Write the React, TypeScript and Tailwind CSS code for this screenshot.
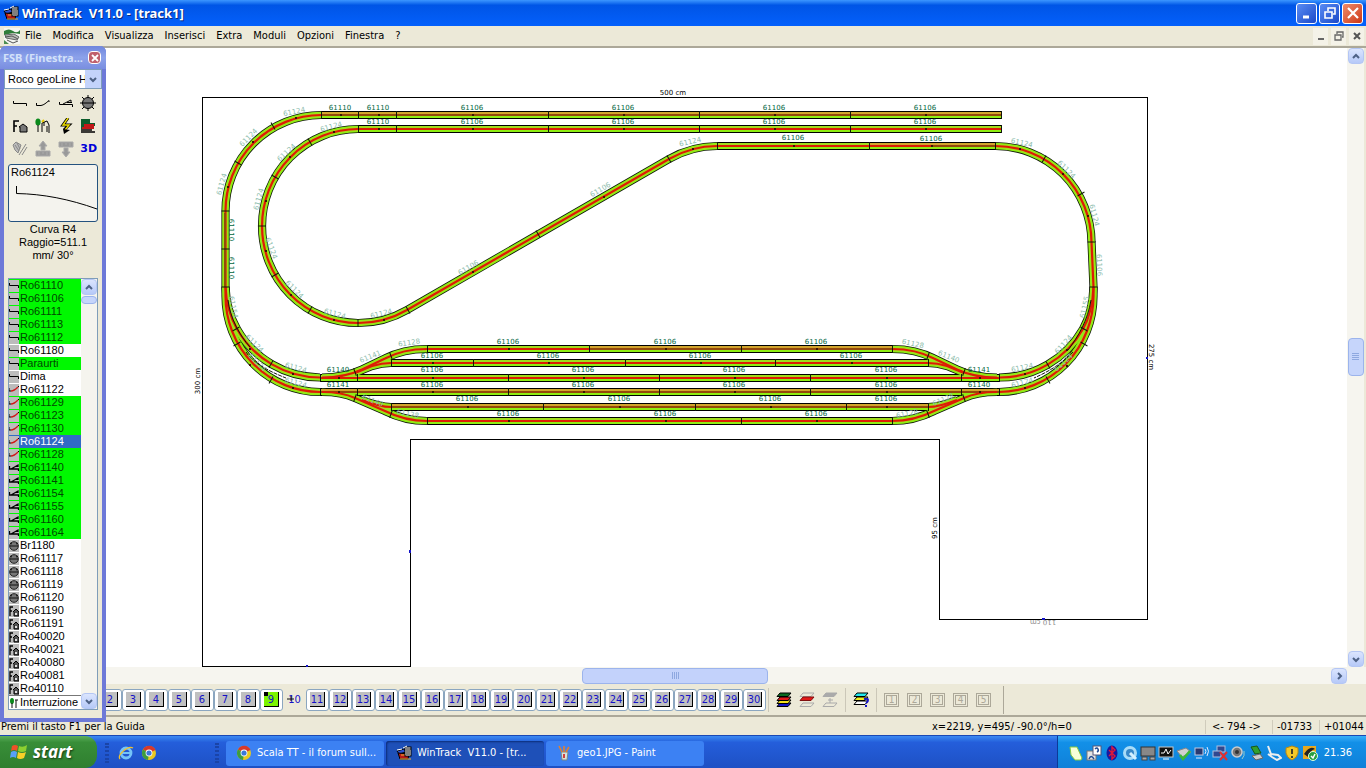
import type { ReactNode } from 'react';

const TAHOMA = "font-['DejaVu_Sans_Condensed','Noto_Sans',sans-serif]";

const MENUS = ['File', 'Modifica', 'Visualizza', 'Inserisci', 'Extra', 'Moduli', 'Opzioni', 'Finestra', '?'];

type PartKind = 'straight' | 'curve' | 'switch' | 'turntable' | 'house';

interface Part {
  name: string;
  kind: PartKind;
  inStock?: boolean;
}

const PARTS: Part[] = [
  { name: 'Ro61110', kind: 'straight', inStock: true },
  { name: 'Ro61106', kind: 'straight', inStock: true },
  { name: 'Ro61111', kind: 'straight', inStock: true },
  { name: 'Ro61113', kind: 'straight', inStock: true },
  { name: 'Ro61112', kind: 'straight', inStock: true },
  { name: 'Ro61180', kind: 'straight' },
  { name: 'Paraurti', kind: 'straight', inStock: true },
  { name: 'Dima', kind: 'straight' },
  { name: 'Ro61122', kind: 'curve' },
  { name: 'Ro61129', kind: 'curve', inStock: true },
  { name: 'Ro61123', kind: 'curve', inStock: true },
  { name: 'Ro61130', kind: 'curve', inStock: true },
  { name: 'Ro61124', kind: 'curve', inStock: true },
  { name: 'Ro61128', kind: 'curve', inStock: true },
  { name: 'Ro61140', kind: 'switch', inStock: true },
  { name: 'Ro61141', kind: 'switch', inStock: true },
  { name: 'Ro61154', kind: 'switch', inStock: true },
  { name: 'Ro61155', kind: 'switch', inStock: true },
  { name: 'Ro61160', kind: 'switch', inStock: true },
  { name: 'Ro61164', kind: 'switch', inStock: true },
  { name: 'Br1180', kind: 'turntable' },
  { name: 'Ro61117', kind: 'turntable' },
  { name: 'Ro61118', kind: 'turntable' },
  { name: 'Ro61119', kind: 'turntable' },
  { name: 'Ro61120', kind: 'turntable' },
  { name: 'Ro61190', kind: 'house' },
  { name: 'Ro61191', kind: 'house' },
  { name: 'Ro40020', kind: 'house' },
  { name: 'Ro40021', kind: 'house' },
  { name: 'Ro40080', kind: 'house' },
  { name: 'Ro40081', kind: 'house' },
  { name: 'Ro40110', kind: 'house' },
];

const SELECTED = 'Ro61124';
const LAYERS = Array.from({ length: 29 }, (_, i) => i + 2);

/* ---------- Track plan ---------- */

interface Straight {
  y: number;
  x1: number;
  x2: number;
  joints: number[];
  labels: number[];
  rust?: boolean;
  labelY: number;
}

const STRAIGHTS: Straight[] = [
  { y: 115, x1: 321, x2: 1001, joints: [321, 358, 396, 548, 699, 850], labels: [340, 378, 472, 623, 774, 925], labelY: 110, rust: true },
  { y: 129, x1: 358, x2: 1001, joints: [358, 396, 548, 699, 850], labels: [378, 472, 623, 774, 925], labelY: 124 },
  { y: 146, x1: 717, x2: 869, joints: [717], labels: [793], labelY: 140 },
  { y: 146, x1: 869, x2: 995, joints: [869, 995], labels: [931], labelY: 141, rust: true },
  { y: 349, x1: 427, x2: 589, joints: [427], labels: [508], labelY: 344 },
  { y: 349, x1: 589, x2: 892, joints: [589, 741, 892], labels: [665, 816], labelY: 344, rust: true },
  { y: 363, x1: 391, x2: 928, joints: [391, 473, 625, 775, 928], labels: [432, 548, 700, 851], labelY: 358 },
  { y: 378, x1: 320, x2: 999, joints: [320, 357, 508, 659, 810, 961, 999], labels: [338, 432, 583, 734, 886, 979], labelY: 372 },
  { y: 392, x1: 320, x2: 999, joints: [320, 357, 508, 659, 810, 961, 999], labels: [338, 432, 583, 734, 886, 979], labelY: 387, rust: true },
  { y: 407, x1: 391, x2: 928, joints: [391, 543, 695, 846, 928], labels: [467, 619, 770, 886], labelY: 401, rust: true },
  { y: 421, x1: 427, x2: 589, joints: [427], labels: [508], labelY: 416 },
  { y: 421, x1: 589, x2: 892, joints: [741, 892], labels: [665, 816], labelY: 416 },
];

function straightName(s: Straight, x: number) {
  if (x < 400 && s.y < 200) return '61110';
  if (x === 338) return s.y === 378 ? '61140' : '61141';
  if (x === 979) return s.y === 378 ? '61141' : '61140';
  return '61106';
}

const CURVES = [
  'M321 115 A96 96 0 0 0 225.5 211 L225.5 296 A95 96 0 0 0 320 392',
  'M225.5 287 C226 300 229 315 237 329 A96 96 0 0 0 320 377.5',
  'M358 129 A96 97 0 0 0 358 323 A97 97 0 0 0 407 310 L669 159 A97 97 0 0 1 717 146',
  'M995 146 A96 97 0 0 1 1091.5 242 L1093.5 287 L1093.5 296 A95 96 0 0 1 999 392',
  'M1093.5 287 C1093 300 1091 315 1083 329 A96 96 0 0 1 999 377.5',
];

// one yard throat; the east side is its mirror image
const LADDER = [
  'M322 377.5 Q345 377.5 362 369.5 L385 358.5 Q403 349 427 349',
  'M355 373 L372 366 Q382 363 391 363',
  'M322 392 Q342 392 355 398 L385 411 Q405 421 427 421',
  'M362 400 Q380 407 391 407',
];

// x, y, angle of each sleeper-wide joint on the curved parts
const JOINTS: [number, number, number][] = [
  [273, 126, 60], [238, 163, 30], [225.5, 211, 0], [225.5, 249, 0], [225.5, 287, 0],
  [310, 142, 60], [275, 177, 30], [262, 226, 0], [275, 275, -30], [310, 310, -60], [358, 323, 90],
  [408, 310, 60], [538, 234, 60], [669, 159, 60], [1044, 159, -60], [1081, 194, -30], [1091.5, 242, 0],
  [1093.5, 287, 0], [236, 329, -30], [271, 364, -60], [237, 344, -30], [271, 380, -60],
  [1084, 329, 30], [1048, 365, 60], [1084, 344, 30], [1048, 380, 60],
  [355, 372, 70], [391, 356, 70], [355, 398, -70], [391, 414, -70],
  [964, 372, -70], [928, 356, -70], [964, 398, 70], [928, 414, 70],
];

const DOTS: [number, number][] = [
  [296, 118], [253, 142], [228, 187], [334, 132], [290, 157], [266, 201], [266, 251], [291, 295], [334, 320],
  [384, 320], [473, 272], [604, 197], [693, 149], [1020, 149], [1063, 174], [1088, 216],
  [250, 349], [293, 374], [250, 365], [293, 388], [1067, 350], [1025, 374], [1067, 366], [1025, 388],
];

const CURVE_LABELS: [string, number, number, number][] = [
  ['61124', 294, 111, -12], ['61124', 248, 137, -45], ['61124', 221, 184, -75],
  ['61124', 331, 126, -15], ['61124', 286, 152, -42], ['61124', 258, 199, -75],
  ['61124', 272, 248, 70], ['61124', 295, 289, 45], ['61124', 335, 313, 15], ['61124', 381, 313, -14],
  ['61106', 468, 267, -30], ['61106', 600, 189, -30], ['61124', 690, 141, -13],
  ['61124', 1022, 142, 13], ['61124', 1067, 169, 45], ['61124', 1095, 215, 75], ['61106', 1100, 265, 88],
  ['61154', 234, 307, 78], ['61124', 255, 343, 45], ['61124', 296, 367, 15], ['61124', 258, 362, 45], ['61124', 296, 382, 15],
  ['61141', 370, 356, -22], ['61128', 409, 342, -8], ['61140', 373, 400, 22], ['61128', 408, 413, 12],
  ['61128', 913, 343, 12], ['61140', 949, 356, 22], ['61124', 1022, 367, -12], ['61124', 1063, 344, -48],
  ['61155', 1084, 307, -78], ['61124', 1022, 382, -15], ['61124', 1063, 362, -42], ['61128', 943, 399, -22], ['61128', 907, 413, -10],
];

function Strokes({ color, width }: { color: string; width: number }) {
  return (
    <g fill="none" stroke={color} strokeWidth={width}>
      {CURVES.map((d) => <path key={d} d={d} />)}
      {LADDER.map((d) => <path key={d} d={d} />)}
      <g transform="translate(1319 0) scale(-1 1)">
        {LADDER.map((d) => <path key={d} d={d} />)}
      </g>
    </g>
  );
}

function TrackPlan() {
  return (
    <svg className="block h-full w-full font-['DejaVu_Sans',sans-serif]" fontSize="7" textAnchor="middle">
      <g transform="translate(0 -48)">
        <path d="M202.5 97.5H1147.5V619.5H939.5V439.5H410.5V666.5H202.5Z" fill="none" stroke="#000" shapeRendering="crispEdges" />
        <g fill="#1414c8">
          <rect x="409" y="550" width="2" height="3" />
          <rect x="1042" y="618" width="3" height="2" />
          <rect x="1146" y="357" width="2" height="2" />
          <rect x="306" y="665" width="2" height="2" />
        </g>

        {STRAIGHTS.map((s) => (
          <rect key={`${s.y}-${s.x1}`} x={s.x1} y={s.y - 4} width={s.x2 - s.x1} height="8" />
        ))}
        <Strokes color="#101808" width={8.2} />
        <Strokes color="#8eee12" width={6.6} />
        <Strokes color="#b0d420" width={3.6} />
        <g shapeRendering="crispEdges">
          {STRAIGHTS.map((s) => (
            <g key={`${s.y}-${s.x1}`}>
              <rect x={s.x1} y={s.y - 3} width={s.x2 - s.x1} height="6" fill="#8eee12" />
              <rect x={s.x1} y={s.y - 3} width={s.x2 - s.x1} height="2" fill={s.rust ? '#d2a52c' : '#a0dc1c'} />
              <rect x={s.x1} y={s.y - 1} width={s.x2 - s.x1} height="2" fill={s.rust ? '#94480a' : '#dc1c04'} />
            </g>
          ))}
        </g>
        <rect x="869" y="145" width="62" height="2" fill="#dc1c04" />
        <Strokes color="#dc1c04" width={2.2} />
        <path d="M225 213V287" stroke="#94480a" strokeWidth="2" />

        <g stroke="#101808" strokeWidth="1">
          {STRAIGHTS.map((s) => s.joints.map((x) => <path key={`${s.y}-${x}`} d={`M${x + 0.5} ${s.y - 4}v8`} />))}
          <path d="M1001.5 111v8M1001.5 125v8" />
          {JOINTS.map(([x, y, a]) => (
            <path key={`${x}-${y}`} d="M-4 0H4" transform={`translate(${x} ${y}) rotate(${a})`} />
          ))}
        </g>
        <g fill="none" stroke="#101808" strokeWidth="1">
          <path d="M228 300C230 318 240 336 250 347M1091 300C1088 320 1078 337 1068 350" />
          <path d="M246 352C252 362 268 371 286 378M1073 352C1064 362 1050 371 1034 378" strokeDasharray="4 1" />
        </g>
        {STRAIGHTS.map((s) => s.labels.map((x) => (
          <g key={`${s.y}-${x}`}>
            <rect x={x} y={s.y - 1} width="2" height="2" fill="#3a1404" />
            <text x={x} y={s.labelY} fill="#00683f">{straightName(s, x)}</text>
          </g>
        )))}
        {DOTS.map(([x, y]) => <rect key={`${x}-${y}`} x={x - 1} y={y - 1} width="2" height="2" fill="#3a1404" />)}
        {[230, 268].map((y) => (
          <text key={y} fill="#00683f" transform={`translate(229 ${y}) rotate(90)`}>61110</text>
        ))}
        {CURVE_LABELS.map(([t, x, y, a]) => (
          <text key={`${x}-${y}`} y="3" fill="#8cbcac" transform={`translate(${x} ${y}) rotate(${a})`}>{t}</text>
        ))}

        <text x="673" y="95">500 cm</text>
        <text transform="translate(200 381) rotate(-90)">300 cm</text>
        <text transform="translate(1149 357) rotate(90)">275 cm</text>
        <text transform="translate(937 528) rotate(-90)">95 cm</text>
        <text fill="#8a8a8a" transform="translate(1043 620) rotate(180)">110 cm</text>
      </g>
    </svg>
  );
}

/* ---------- Icons ---------- */

function AppIcon() {
  return (
    <svg viewBox="0 0 16 16" className="h-4 w-4 shrink-0">
      <path d="M1 6 L8 4 L10 7 L3 9Z" fill="#2c50d0" stroke="#000" />
      <path d="M2 8 L13 9 L12 14 H4Z" fill="#b81818" stroke="#000" />
      <path d="M5 10H12M4 14H15" stroke="#f0b030" />
      <rect x="9" y="2" width="6" height="9" fill="#fff" stroke="#000" />
      <path d="M11 5v5M13 5v5M10 4H15" stroke="#000" />
      <path d="M1 5 L6 4 M7 3 L11 1" stroke="#fff" />
    </svg>
  );
}

function DocIcon() {
  return (
    <svg viewBox="0 0 16 16" className="h-4 w-4 shrink-0">
      <rect width="16" height="16" fill="#f4f6f2" />
      <path d="M0 3 Q5 0 9 3 T16 2 V6 L9 5 L0 7Z" fill="#2f7d3a" />
      <path d="M1 7 L10 6 L15 9 L13 12 L2 10Z" fill="#b8bcb8" stroke="#666" />
      <path d="M3 12 L9 15 L14 13 M1 9 L8 8 L14 11" stroke="#555" fill="none" />
      <path d="M0 12 L5 16 H0Z" fill="#4a8c50" />
    </svg>
  );
}

function Chevron({ dir }: { dir: 'up' | 'down' | 'right' }) {
  const d = { up: 'M2 7 L5 4 L8 7', down: 'M2 4 L5 7 L8 4', right: 'M4 2 L7 5 L4 8' }[dir];
  return (
    <svg viewBox="0 0 10 10" className="h-[10px] w-[10px]">
      <path d={d} fill="none" stroke="#4d6185" strokeWidth="2" />
    </svg>
  );
}

function ScrollButton({ dir, label }: { dir: 'up' | 'down' | 'right'; label: string }) {
  return (
    <button
      aria-label={label}
      className="flex h-4 w-4 shrink-0 items-center justify-center rounded-sm border border-[#b4c6f4] bg-linear-to-b from-[#dbe5fe] to-[#b6c9f8]"
    >
      <Chevron dir={dir} />
    </button>
  );
}

function PartIcon({ kind }: { kind: PartKind }) {
  return (
    <svg viewBox="0 0 10 12" className="h-3 w-[10px] shrink-0 bg-[#bcbcbc]">
      {kind === 'straight' && <path d="M0.5 3V5.500H9.500V8" fill="none" stroke="#000" />}
      {kind === 'curve' && (
        <>
          <path d="M0 4V7H2M8 4L10 2" fill="none" stroke="#000" />
          <path d="M2 7C5 7 7 5 9 3" fill="none" stroke="#d01818" strokeWidth="1.4" />
        </>
      )}
      {kind === 'switch' && <path d="M0.5 4V7H9.500V9M2 7L9 3V5" fill="none" stroke="#000" strokeWidth="1.3" />}
      {kind === 'turntable' && (
        <>
          <circle cx="5" cy="6" r="4.3" fill="#777" stroke="#222" />
          <path d="M1 6H9M1 3L3 4M9 3L7 4" stroke="#111" />
        </>
      )}
      {kind === 'house' && (
        <>
          <path d="M1 11V2H4M1 6H3" fill="none" stroke="#000" strokeWidth="1.3" />
          <path d="M4 7L7 4L10 7V11H5V7" fill="#555" stroke="#000" />
          <rect x="6" y="8" width="2" height="2" fill="#ddd" />
        </>
      )}
    </svg>
  );
}

const TOOLS: { label: string; icon: ReactNode }[] = [
  { label: 'Rettilinei', icon: <path d="M1.500 6V8.500H14.500V11" fill="none" stroke="#000" /> },
  { label: 'Curve', icon: <path d="M1.500 8V10.500H6C9 10 11 8 14 5.500V7" fill="none" stroke="#000" /> },
  { label: 'Scambi', icon: <path d="M1.500 7V9.500H14.500V12M5 9L13 5V7M9 7.500H14" fill="none" stroke="#000" /> },
  {
    label: 'Piattaforme',
    icon: (
      <>
        <circle cx="8" cy="8" r="5.5" fill="#777" stroke="#000" />
        <path d="M0 8H16M8 0V3M8 13V16M2 2L4 4M14 2L12 4M2 14L4 12M14 14L12 12" stroke="#000" />
      </>
    ),
  },
  {
    label: 'Edifici',
    icon: (
      <>
        <path d="M2 14V3H7M2 8H5" fill="none" stroke="#000" strokeWidth="1.6" />
        <path d="M7 9L11 6L15 9V14H8V9Z" fill="#777" stroke="#000" />
      </>
    ),
  },
  {
    label: 'Accessori',
    icon: (
      <>
        <ellipse cx="3" cy="4" rx="2.6" ry="3.5" fill="#0b8a1c" />
        <path d="M3 7V14M7 14V5L12 3L14 7V15M9 4V8M12 8V14" fill="none" stroke="#000" />
        <path d="M7 4L9 2" stroke="#e8c800" strokeWidth="2" />
      </>
    ),
  },
  {
    label: 'Elettrico',
    icon: (
      <>
        <path d="M10 0L5 7H11L6 12" fill="none" stroke="#000" strokeWidth="3" />
        <path d="M10 0L5 7H11L7 12" fill="none" stroke="#f0e000" strokeWidth="1.4" />
        <path d="M5 11L6 16L12 12Z" fill="#000" />
      </>
    ),
  },
  {
    label: 'Livelli',
    icon: (
      <>
        <path d="M1 1H10V5H15V8H10V11H1Z" fill="#0c5c2c" />
        <path d="M4 6H14V11H2V9H4Z" fill="#c01818" />
        <path d="M1 14H15M1 12H12" stroke="#000" strokeWidth="1.5" />
      </>
    ),
  },
  {
    label: 'Modifica simbolo',
    icon: <path d="M1 4L4 1L9 4L6 12L3 9ZM3 4L7 10M7 14L14 3M10 14L15 6M5 2L8 8" fill="#bbb" stroke="#888" />,
  },
  {
    label: 'Sali',
    icon: <path d="M8 0L12 5H10V9H6V5H4ZM1 10H15V15H1ZM4 11V14M7 12H9M12 11V14" fill="#999" stroke="#aaa" />,
  },
  {
    label: 'Scendi',
    icon: <path d="M8 16L12 11H10V7H6V11H4ZM1 1H15V6H1ZM4 2V5M7 3H9M12 2V5" fill="#999" stroke="#aaa" />,
  },
];

function CatalogWindow() {
  return (
    <aside className="absolute top-[46px] left-0 z-10 flex w-[106px] flex-col rounded-t-md border-4 border-t-0 border-[#6d79d8] bg-[#ece9d8] font-['Liberation_Sans',sans-serif] text-[11px] leading-[13px] text-black">
      <header className="-mx-1 flex h-[23px] items-center justify-between rounded-t-md bg-linear-to-b from-[#6f86dd] via-[#8ca2ea] to-[#7a8ee0] pr-[5px] pl-[3px]">
        <h2 className="min-w-0 flex-1 font-['Noto_Sans',sans-serif] text-[11px] font-bold whitespace-nowrap text-[#d4e2fa]">FSB (Finestra...</h2>
        <button aria-label="Chiudi FSB" className="flex h-[13px] w-[13px] shrink-0 items-center justify-center rounded-sm border border-white bg-[#c0606c]">
          <svg viewBox="0 0 8 8" className="h-2 w-2"><path d="M1 1L7 7M7 1L1 7" stroke="#fff" strokeWidth="1.8" /></svg>
        </button>
      </header>

      <div className="flex h-[20px] border border-[#7f9db9] bg-white">
        <select aria-label="Catalogo" className="min-w-0 flex-1 appearance-none overflow-hidden pl-[3px] text-[11px] outline-none">
          <option>Roco geoLine H0</option>
        </select>
        <span className="pointer-events-none flex w-4 items-center justify-center bg-[#c3d3fb]"><Chevron dir="down" /></span>
      </div>

      <div className="grid grid-cols-4 gap-x-[5px] pt-[6px] pr-1 pl-2">
        {TOOLS.map((t) => (
          <button key={t.label} aria-label={t.label} className="flex h-[23px] w-4 items-start">
            <svg viewBox="0 0 16 16" className="h-4 w-4">{t.icon}</svg>
          </button>
        ))}
        <button className="flex h-[23px] w-4 items-start font-['DejaVu_Sans',sans-serif] text-[11px] leading-4 font-bold text-[#0000d8]">3D</button>
      </div>

      <button className="mx-1 flex h-[58px] flex-col rounded-[3px] border border-[#24527f] bg-[#f4f3ee] pt-[1px] pl-[2px] text-left">
        {SELECTED}
        <svg viewBox="0 0 86 40" className="h-10 w-[86px]">
          <path d="M5.500 7V14.500C32 15 58 20 86 30" fill="none" stroke="#000" />
        </svg>
      </button>
      <p className="mt-px px-2 text-center">Curva R4 Raggio=511.1 mm/ 30°</p>

      <div className="mx-1 mt-4 mb-2 flex h-[432px] border border-[#7f9db9] bg-white">
        <ul className="min-w-0 flex-1">
          {PARTS.map((p) => (
            <li
              key={p.name}
              className={`flex h-[13px] items-center gap-px ${
                p.name === SELECTED ? 'bg-[#316ac5] text-white' : p.inStock ? 'bg-[#00f800] text-[#004800]' : 'bg-white'}`}
            >
              <PartIcon kind={p.kind} />
              {p.name}
            </li>
          ))}
          <li className="flex h-[14px] items-center gap-px border-t border-[#777] text-[11px]">
            <svg viewBox="0 0 10 12" className="h-3 w-[10px] shrink-0">
              <ellipse cx="3" cy="4" rx="2" ry="3" fill="#0b8a1c" />
              <path d="M3 6V11M7 3V11M6 3H9" stroke="#111" />
            </svg>
            Interruzione
          </li>
        </ul>
        <div className="flex w-4 flex-col bg-[#f5f4ee]">
          <ScrollButton dir="up" label="Elenco su" />
          <button aria-label="Cursore elenco" className="mt-px h-2 rounded-sm border border-[#9cb4ec] bg-[#c6d5fb]" />
          <div className="flex-1" />
          <ScrollButton dir="down" label="Elenco giù" />
        </div>
      </div>
    </aside>
  );
}

/* ---------- Window chrome ---------- */

function TitleBar() {
  const base = 'flex h-[21px] w-[21px] items-center justify-center rounded-[3px] border border-white';
  return (
    <header className="flex h-[26px] shrink-0 items-center bg-linear-to-b from-[#3c96ff] via-[#0055e6] via-20% to-[#0460fc] pr-[3px] pl-[3px]">
      <AppIcon />
      <h1 className="ml-[3px] flex-1 font-['Noto_Sans',sans-serif] text-[13px] font-bold whitespace-pre text-white [text-shadow:1px_1px_#0a2a80]">WinTrack  V11.0 - [track1]</h1>
      <div className="flex gap-[2px]">
        <button aria-label="Riduci a icona" className={`${base} bg-linear-to-br from-[#5a8cf4] to-[#1c48c8]`}>
          <svg viewBox="0 0 16 16" className="h-4 w-4"><path d="M4 12H10" stroke="#fff" strokeWidth="3" /></svg>
        </button>
        <button aria-label="Ripristina" className={`${base} bg-linear-to-br from-[#5a8cf4] to-[#1c48c8]`}>
          <svg viewBox="0 0 16 16" className="h-4 w-4"><path d="M6 6V3H13V9H11M3 7H10V13H3Z" fill="none" stroke="#fff" strokeWidth="1.6" /></svg>
        </button>
        <button aria-label="Chiudi" className={`${base} bg-linear-to-br from-[#f08a68] to-[#cc3410]`}>
          <svg viewBox="0 0 16 16" className="h-4 w-4"><path d="M3 3L13 13M13 3L3 13" stroke="#fff" strokeWidth="2.200" /></svg>
        </button>
      </div>
    </header>
  );
}

function MenuBar() {
  const base = 'flex h-[17px] w-[15px] items-center justify-center bg-[#f4f2e8]';
  return (
    <nav className="flex h-[22px] shrink-0 items-center border-b-2 border-[#aca899] bg-[#ece9d8] pr-[2px] pl-1">
      <DocIcon />
      <div className="flex flex-1 gap-[11px] pl-[5px]">
        {MENUS.map((m) => <button key={m}>{m}</button>)}
      </div>
      <div className="flex gap-[3px]">
        <button aria-label="Riduci documento" className={base}>
          <svg viewBox="0 0 10 10" className="h-[10px] w-[10px]"><path d="M2 8H8" stroke="#666" strokeWidth="2" /></svg>
        </button>
        <button aria-label="Ripristina documento" className={base}>
          <svg viewBox="0 0 10 10" className="h-[10px] w-[10px]"><path d="M3 3V1H9V6H8M1 4H7V9H1Z" fill="none" stroke="#666" strokeWidth="1.3" /></svg>
        </button>
        <button aria-label="Chiudi documento" className={base}>
          <svg viewBox="0 0 10 10" className="h-[10px] w-[10px]"><path d="M2 2L8 8M8 2L2 8" stroke="#555" strokeWidth="2" /></svg>
        </button>
      </div>
    </nav>
  );
}

function Sheet({ y, fill, stroke = '#000' }: { y: number; fill: string; stroke?: string }) {
  return <path d="M4 1H15L12 4.500H1Z" transform={`translate(0 ${y})`} fill={fill} stroke={stroke} />;
}

function LayerBar() {
  const iconButton = 'flex w-[23px] justify-center';
  return (
    <div className="flex h-[31px] shrink-0 items-center bg-[#ece9d8] pl-[99px] text-[#1410c8]">
      {LAYERS.map((n) => {
        if (n === 10) {
          return (
            <button key={n} className="relative h-6 w-[23px] text-[11px]">
              10
              <svg viewBox="0 0 8 8" className="absolute top-[7px] left-1 h-2 w-2"><path d="M0 4H7M4 1V6" stroke="#111" /></svg>
            </button>
          );
        }
        return (
          <button key={n} className="flex h-[22px] w-[23px] items-center justify-center rounded-[3px] border border-[#8ba6c0] bg-white text-[11px]">
            <span className={`relative flex h-[15px] w-[15px] items-center justify-center border-r border-b border-black leading-none ${n === 9 ? 'bg-[#7cf400]' : 'bg-[#c0c0c0]'}`}>
              {n}
              {n === 9 && <i className="absolute top-0 left-0 h-1 w-1 bg-black" />}
            </span>
          </button>
        );
      })}
      <div className="ml-[2px] flex h-6 items-center border-l border-[#cbc7b8] pl-[3px]">
        <button aria-label="Tutti i livelli" className={iconButton}>
          <svg viewBox="0 0 16 16" className="h-4 w-4">
            <Sheet y={10} fill="#1414c8" />
            <Sheet y={7} fill="#f0e020" />
            <Sheet y={4} fill="#e01818" />
            <Sheet y={0} fill="#0a6a20" />
          </svg>
        </button>
        <button aria-label="Livello attivo" className={iconButton}>
          <svg viewBox="0 0 16 16" className="h-4 w-4">
            <Sheet y={10} fill="#ece9d8" stroke="#aaa" />
            <Sheet y={0} fill="#ece9d8" stroke="#aaa" />
            <Sheet y={4} fill="#e01818" stroke="#801010" />
          </svg>
        </button>
        <button aria-label="Sposta livello" className={iconButton}>
          <svg viewBox="0 0 16 16" className="h-4 w-4">
            <Sheet y={10} fill="#ece9d8" stroke="#aaa" />
            <Sheet y={0} fill="#aaa" stroke="#aaa" />
            <path d="M6 8H11M8 6V11" stroke="#aaa" />
          </svg>
        </button>
      </div>
      <div className="ml-1 flex h-6 items-center border-l border-[#cbc7b8] pl-[3px]">
        <button aria-label="Nomi livelli" className={iconButton}>
          <svg viewBox="0 0 16 16" className="h-4 w-4">
            <Sheet y={8} fill="#fff" />
            <Sheet y={4} fill="#f0f020" />
            <Sheet y={0} fill="#20e8f0" />
            <path d="M11 7Q15 6 15 8T13 11M13 13V15" fill="none" stroke="#1414c8" strokeWidth="2" />
          </svg>
        </button>
      </div>
      <div className="ml-1 flex h-6 items-center border-l border-[#cbc7b8] pl-[3px]">
        {[1, 2, 3, 4, 5].map((n) => (
          <button key={n} disabled className="flex w-[23px] justify-center text-[10px] leading-none text-[#aca899]">
            <span className="flex h-[14px] w-[15px] items-center justify-center border-[3px] border-double border-[#aca899]">{n}</span>
          </button>
        ))}
      </div>
      <div className="ml-2 h-7 border-l border-[#aca899]" />
    </div>
  );
}

function StatusBar() {
  return (
    <footer className="flex h-[20px] shrink-0 items-center border-t-2 border-[#aca899] bg-[#ece9d8] pt-px">
      <span className="flex-1 pl-px">Premi il tasto F1 per la Guida</span>
      <span className="w-[273px]">x=2219, y=495/ -90.0°/h=0</span>
      <span className="w-[67px] border-l border-[#d0ccbc] pl-[6px]">&lt;- 794 -&gt;</span>
      <span className="w-[47px] border-l border-[#d0ccbc] pl-1">-01733</span>
      <span className="w-[47px] border-l border-[#d0ccbc] pl-1">+01044</span>
    </footer>
  );
}

/* ---------- Taskbar ---------- */

function ChromeIcon() {
  return (
    <svg viewBox="0 0 16 16" className="h-4 w-4 shrink-0">
      <circle cx="8" cy="8" r="7" fill="#e8c820" />
      <path d="M8 8L2 4.400A7 7 0 0 1 14.500 5Z" fill="#d8392c" />
      <path d="M8 8L2 4.400A7 7 0 0 0 7 15Z" fill="#3c9c40" />
      <circle cx="8" cy="8" r="3.400" fill="#fff" />
      <circle cx="8" cy="8" r="2.600" fill="#3c78d8" />
    </svg>
  );
}

const TRAY: ReactNode[] = [
  <path d="M2 2H9L14 13L13 15H7L3 10Z" fill="#f6ffd8" stroke="#86c840" />,
  <><rect x="1" y="6" width="9" height="9" fill="#e4e4e4" stroke="#777" /><rect x="7" y="1" width="8" height="9" fill="#fff" stroke="#557" /><path d="M9 4Q11 2 12 4T11 7M3 14Q5 9 8 14" fill="none" stroke="#234a90" strokeWidth="1.5" /></>,
  <><ellipse cx="8" cy="8" rx="5.500" ry="7.500" fill="#1818a0" /><path d="M5 5L11 11L8 14V2L11 5L5 11" fill="none" stroke="#e01838" strokeWidth="1.4" /></>,
  <><circle cx="8" cy="8" r="5.500" fill="#3888c8" stroke="#a8dcf8" strokeWidth="3" /><path d="M8 8L14 14" stroke="#d4f0ff" strokeWidth="3" /></>,
  <><rect x="1" y="2" width="14" height="9" fill="#888" stroke="#333" /><rect x="2" y="12" width="5" height="3" fill="#aaa" stroke="#444" /><rect x="10" y="12" width="5" height="3" fill="#aaa" stroke="#444" /></>,
  <><rect x="1" y="2" width="14" height="10" fill="#111" stroke="#c8c8c8" /><path d="M3 8H6L8 4L10 9L13 5M5 14H11" fill="none" stroke="#fff" /></>,
  <><path d="M1 6L10 3L15 7L6 12Z" fill="#d0d0d0" stroke="#888" /><path d="M4 10L7 14L14 6" fill="none" stroke="#38b838" strokeWidth="2.500" /></>,
  <><rect x="1" y="3" width="8" height="7" fill="#283870" stroke="#c0c8e0" /><path d="M2 13H8M11 4Q13 6 11 9M13 2Q16 6 13 11" fill="none" stroke="#e0e8ff" /></>,
  <><rect x="5" y="1" width="8" height="6" fill="#304890" stroke="#b0c0e0" /><rect x="1" y="6" width="8" height="6" fill="#304890" stroke="#b0c0e0" /><path d="M8 7L15 15M15 7L8 15" stroke="#e03030" strokeWidth="2" /></>,
  <><circle cx="7" cy="7" r="5" fill="#777" stroke="#ccc" strokeWidth="1.500" /><circle cx="7" cy="7" r="2" fill="#333" /><path d="M12 14Q15 11 14 6" fill="none" stroke="#9cc" /></>,
  <><path d="M3 2L9 1L13 8L7 9Z" fill="#30a030" stroke="#185818" /><path d="M4 11L12 9L15 13L8 15Z" fill="#ccc" stroke="#666" /></>,
  <path d="M2 1L5 9L12 10L15 13L11 15L6 12L2 9" fill="none" stroke="#eee" strokeWidth="2" />,
  <><path d="M8 1L14 3V8Q13 13 8 15Q3 13 2 8V3Z" fill="#f4c828" stroke="#b88810" /><path d="M8 4V9M8 11V13" stroke="#222" strokeWidth="1.600" /></>,
  <><rect x="1" y="1" width="13" height="13" fill="#e8a820" /><path d="M2 9Q8 0 13 4Q8 5 6 12" fill="#222" /><circle cx="11" cy="11" r="4.500" fill="#28a040" stroke="#dfd" /><path d="M9 11L11 13L13 9" fill="none" stroke="#fff" strokeWidth="1.500" /></>,
];

function Grip() {
  return <i className="h-5 w-1 border-x-2 border-dotted border-[#1a44a8]" />;
}

function Taskbar() {
  const task = 'flex h-[25px] w-[158px] items-center gap-[5px] rounded-[3px] pl-[10px] text-left text-[11px] text-white';
  return (
    <div className="flex h-[33px] shrink-0 items-center border-t border-[#1a48b4] bg-linear-to-b from-[#3d8af2] via-[#245edb] via-20% to-[#1e50c4]">
      <button className="flex h-full w-[97px] items-center gap-1 rounded-r-xl bg-linear-to-b from-[#5cb05c] via-[#388e38] via-20% to-[#2f7f2f] pl-[9px] font-['Open_Sans',sans-serif] text-[17px] font-bold text-white italic [text-shadow:1px_1px_2px_#143c14]">
        <svg viewBox="0 0 20 20" className="h-5 w-5">
          <path d="M3 4Q6 2 9 4L8 9Q5 7 2 9Z" fill="#f05028" />
          <path d="M10 4Q14 6 18 3L17 9Q13 11 9 9Z" fill="#8cd030" />
          <path d="M2 10Q5 8 8 10L7 16Q4 14 1 16Z" fill="#58a0f8" />
          <path d="M9 10Q13 12 17 10L15 16Q11 18 8 16Z" fill="#f8d028" />
        </svg>
        start
      </button>
      <div className="flex flex-1 items-center pt-[2px] pl-2">
        <Grip />
        <div className="flex w-[106px] gap-[7px] pl-[9px]">
          <button aria-label="Internet Explorer">
            <svg viewBox="0 0 16 16" className="h-4 w-4">
              <circle cx="8" cy="8" r="5" fill="none" stroke="#74c4f8" strokeWidth="2.800" />
              <path d="M4 8H13" stroke="#74c4f8" strokeWidth="2" />
              <path d="M2 14C-1 10 10 0 15 3" fill="none" stroke="#f0c030" strokeWidth="1.300" />
            </svg>
          </button>
          <button aria-label="Chrome"><ChromeIcon /></button>
        </div>
        <Grip />
        <div className="flex gap-[2px] pl-[7px]">
          <button className={`${task} bg-[#3c81f3]`}><ChromeIcon />Scala TT - il forum sull...</button>
          <button className={`${task} bg-[#1e50b8] whitespace-pre shadow-[inset_1px_1px_2px_#0c2c78]`}><AppIcon />WinTrack  V11.0 - [tr...</button>
          <button className={`${task} bg-[#3c81f3]`}>
            <svg viewBox="0 0 16 16" className="h-4 w-4">
              <path d="M5 7H12L11 15H6Z" fill="#d8e0d8" stroke="#788" />
              <path d="M6 7L3 1M8 7L8 1M10 7L13 2" stroke="#e08030" strokeWidth="1.600" />
              <path d="M8 9V13" stroke="#d04040" strokeWidth="2" />
            </svg>
            geo1.JPG - Paint
          </button>
        </div>
      </div>
      <div className="flex h-full items-center gap-[2px] border-l border-[#0c3a98] bg-linear-to-b from-[#38b0f8] via-[#1290e8] via-20% to-[#1080d8] pt-[2px] pr-[14px] pl-[10px] text-[11px] text-white">
        {TRAY.map((icon, i) => <svg key={i} viewBox="0 0 16 16" className="h-4 w-4">{icon}</svg>)}
        <time className="ml-1">21.36</time>
      </div>
    </div>
  );
}

export default function App() {
  return (
    <div className={`relative flex h-screen flex-col overflow-hidden bg-[#ece9d8] text-[11px] leading-[14px] text-black ${TAHOMA}`}>
      <TitleBar />
      <MenuBar />
      <CatalogWindow />
      <main className="flex min-h-0 flex-1">
        <div className="min-w-0 flex-1 overflow-hidden bg-white"><TrackPlan /></div>
        <div className="mr-[2px] flex w-[17px] flex-col items-center bg-[#f6f5ef]">
          <ScrollButton dir="up" label="Scorri su" />
          <div className="flex-[272]" />
          <button aria-label="Cursore verticale" className="flex h-[38px] w-4 flex-col items-center justify-center gap-px rounded-sm border border-[#9cb4ec] bg-[#c6d5fb]">
            {[0, 1, 2, 3].map((i) => <i key={i} className="h-px w-[7px] bg-[#8ea8e0]" />)}
          </button>
          <div className="flex-[274]" />
          <ScrollButton dir="down" label="Scorri giù" />
        </div>
      </main>
      <div className="flex h-[17px] shrink-0 items-center bg-[#f6f5ef] pr-[19px]">
        <div className="flex-[582]" />
        <button aria-label="Cursore orizzontale" className="flex h-4 w-[186px] items-center justify-center gap-px rounded-sm border border-[#9cb4ec] bg-[#c3d2fb]">
          {[0, 1, 2, 3].map((i) => <i key={i} className="h-[7px] w-px bg-[#8ea8e0]" />)}
        </button>
        <div className="flex-[563]" />
        <ScrollButton dir="right" label="Scorri a destra" />
      </div>
      <LayerBar />
      <StatusBar />
      <Taskbar />
    </div>
  );
}
